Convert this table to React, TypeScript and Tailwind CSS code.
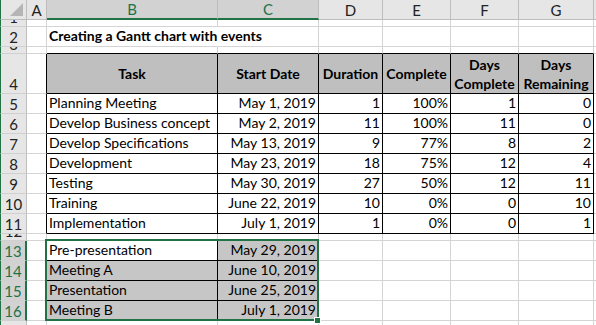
import React from "react";

type CellDef = {
  text?: string;
  align?: "left" | "right" | "center";
  bold?: boolean;
  bg?: string;
  rb?: string;
  bb?: string;
  header?: boolean;
  overflow?: boolean;
};

type RowDef = {
  n: number;
  cells: Record<string, CellDef>;
  sel?: boolean;
  hideNum?: boolean;
};

const colLetters = ["A", "B", "C", "D", "E", "F", "G", "H"];

const tasks: [string, string, number, string, number, number][] = [
  ["Planning Meeting", "May 1, 2019", 1, "100%", 1, 0],
  ["Develop Business concept", "May 2, 2019", 11, "100%", 11, 0],
  ["Develop Specifications", "May 13, 2019", 9, "77%", 8, 2],
  ["Development", "May 23, 2019", 18, "75%", 12, 4],
  ["Testing", "May 30, 2019", 27, "50%", 12, 11],
  ["Training", "June 22, 2019", 10, "0%", 0, 10],
  ["Implementation", "July 1, 2019", 1, "0%", 0, 1],
];

const events: [string, string][] = [
  ["Pre-presentation", "May 29, 2019"],
  ["Meeting A", "June 10, 2019"],
  ["Presentation", "June 25, 2019"],
  ["Meeting B", "July 1, 2019"],
];

const B = "border-r-black";
const BB = "border-b-black";

function buildRows(): RowDef[] {
  const rows: RowDef[] = [];
  rows.push({ n: 1, cells: {} });
  rows.push({
    n: 2,
    cells: {
      B: { text: "Creating a Gantt chart with events", bold: true, overflow: true, rb: "border-r-white" },
    },
  });
  rows.push({
    n: 3,
    cells: {
      B: { bb: BB },
      C: { bb: BB },
      D: { bb: BB },
      E: { bb: BB },
      F: { bb: BB },
      G: { bb: BB },
    },
  });
  const heads = ["Task", "Start Date", "Duration", "Complete", "Days Complete", "Days Remaining"];
  const r4: Record<string, CellDef> = { A: { rb: B } };
  ["B", "C", "D", "E", "F", "G"].forEach((c, i) => {
    r4[c] = { text: heads[i], header: true, bold: true, bg: "bg-[#bfbfbf]", rb: B, bb: BB };
  });
  rows.push({ n: 4, cells: r4 });
  tasks.forEach((t, i) => {
    rows.push({
      n: 5 + i,
      cells: {
        A: { rb: B },
        B: { text: t[0], align: "left", rb: B, bb: BB },
        C: { text: t[1], align: "right", rb: B, bb: BB },
        D: { text: String(t[2]), align: "right", rb: B, bb: BB },
        E: { text: t[3], align: "right", rb: B, bb: BB },
        F: { text: String(t[4]), align: "right", rb: B, bb: BB },
        G: { text: String(t[5]), align: "right", rb: B, bb: BB },
      },
    });
  });
  rows.push({ n: 12, cells: { B: { bb: BB }, C: { bb: BB } } });
  events.forEach((e, i) => {
    rows.push({
      n: 13 + i,
      sel: true,
      cells: {
        A: { rb: B },
        B: { text: e[0], align: "left", rb: B, bb: BB, bg: i === 0 ? "bg-white" : "bg-[#c6c6c6]" },
        C: { text: e[1], align: "right", rb: B, bb: BB, bg: "bg-[#c6c6c6]" },
      },
    });
  });
  rows.push({ n: 17, cells: {}, hideNum: true });
  return rows;
}

function Cell({ d }: { d?: CellDef }) {
  const def = d || {};
  const justify =
    def.header || def.align === "center"
      ? "justify-center text-center"
      : def.align === "right"
      ? "justify-end text-right pr-[2px]"
      : "justify-start pl-[2px]";
  const items = def.header ? "items-center" : "items-end pb-[1px]";
  return (
    <div
      className={[
        "flex border-r border-b min-w-0",
        def.rb || "border-r-[#d4d4d4]",
        def.bb || "border-b-[#d4d4d4]",
        def.bg || "bg-white",
        def.overflow ? "overflow-visible relative z-10" : "overflow-hidden",
        items,
        justify,
      ].join(" ")}
    >
      {def.text !== undefined && (
        <span
          className={[
            def.header ? "leading-[19px]" : "leading-[18px] whitespace-nowrap",
            def.bold ? "font-bold" : "",
          ].join(" ")}
        >
          {def.text}
        </span>
      )}
    </div>
  );
}

export default function App() {
  const rows = buildRows();
  return (
    <div
      className="relative w-[596px] h-[325px] overflow-hidden bg-white text-[14px] text-black"
      style={{ fontFamily: "Lato, 'Noto Sans', sans-serif" }}
    >
      <div className="grid grid-cols-[27px_20px_171px_101px_64px_68px_68px_75px_1fr] grid-rows-[20px_7px_20px_7px_40px_repeat(7,20px)_7px_repeat(4,20px)_20px]">
        <div className="relative bg-[#e6e6e6] border-l border-l-[#217346] border-r border-r-[#bdbdbd] border-b border-b-[#bdbdbd]">
          <svg className="absolute right-[3px] bottom-[3px]" width="13" height="13" viewBox="0 0 13 13">
            <polygon points="13,0 13,13 0,13" fill="#b5b5b5" />
          </svg>
        </div>
        {colLetters.map((c) => {
          const sel = c === "B" || c === "C";
          return (
            <div
              key={c}
              className={[
                "flex items-center justify-center border-r border-r-[#bdbdbd] overflow-hidden text-[15px]",
                sel
                  ? "bg-[#d2d2d2] text-[#217346] border-b-2 border-b-[#217346]"
                  : "bg-[#e6e6e6] text-[#222] border-b border-b-[#bdbdbd]",
              ].join(" ")}
            >
              {c !== "H" && <span className="leading-[18px]">{c}</span>}
            </div>
          );
        })}
        {rows.map((r) => (
          <React.Fragment key={r.n}>
            <div
              className={[
                "flex items-end justify-center overflow-hidden border-l border-l-[#217346] border-b border-b-[#d0d0d0] text-[15px]",
                r.sel
                  ? "bg-[#d2d2d2] text-[#217346] border-r-2 border-r-[#217346]"
                  : "bg-[#e6e6e6] text-[#222] border-r border-r-[#bdbdbd]",
              ].join(" ")}
            >
              {!r.hideNum && <span className="leading-[18px]">{r.n}</span>}
            </div>
            {colLetters.map((c) => (
              <Cell key={c} d={r.cells[c]} />
            ))}
          </React.Fragment>
        ))}
      </div>
      <div className="absolute left-[45px] top-[239px] w-[274px] h-[82px] border-2 border-[#217346] pointer-events-none z-20" />
      <div className="absolute left-[314px] top-[317px] w-[7px] h-[7px] bg-[#217346] border border-white z-30" />
    </div>
  );
}
